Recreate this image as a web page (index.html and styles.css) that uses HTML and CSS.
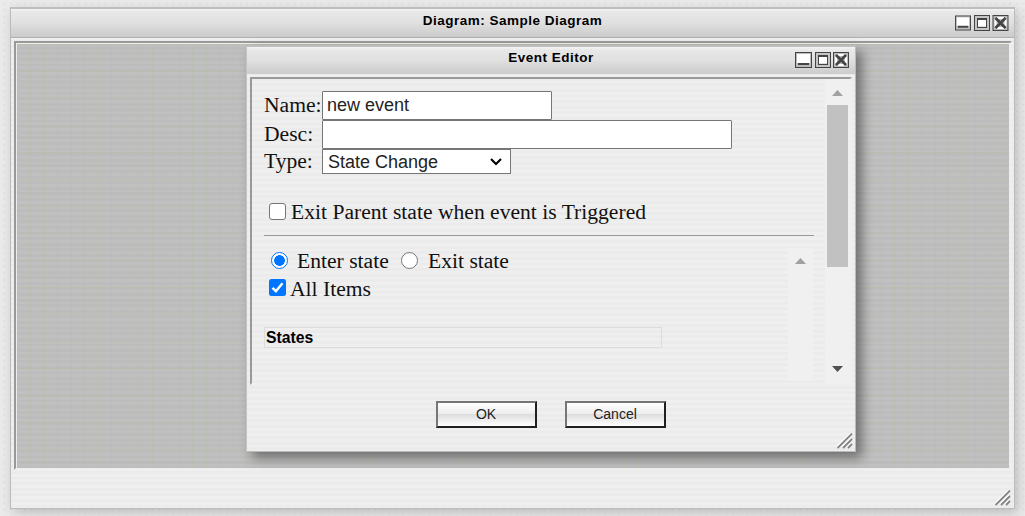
FILE: index.html
```html
<!DOCTYPE html>
<html lang="en">
<head>
<meta charset="utf-8">
<title>Diagram: Sample Diagram</title>
<link rel="stylesheet" href="styles.css">
</head>
<body>
<svg class="defs" width="0" height="0">
  <symbol id="min" viewBox="0 0 17 16"><path fill="#444" d="M0 0h17v16H0z"/><path fill="#bbb" d="M1 1h15v14H1z"/><path fill="#fff" d="M2 2h13v9H2z"/><path fill="#444" d="M3 11h11v2H3z"/></symbol>
  <symbol id="max" viewBox="0 0 16 16"><path fill="#444" d="M0 0h16v16H0z"/><path fill="#c4c4c4" d="M1 1h14v14H1z"/><path fill="#444" d="M3 3h10v10H3z"/><path fill="#ddd" d="M4 5h8v7H4z"/><path fill="#fff" d="M4 5h8v6H4z"/></symbol>
  <symbol id="close" viewBox="0 0 16 16"><path fill="#444" d="M0 0h16v16H0z"/><path fill="#bbb" d="M1 1h14v14H1z"/><path fill="#fff" d="M4 2h8v2H4zM4 12h8v2H4zM2 4h2v8H2zM12 4h2v8h-2z"/><path stroke="#444" stroke-width="2.800" d="M3 3l10 10M13 3L3 13"/></symbol>
  <symbol id="grip" viewBox="0 0 16 16"><path stroke="#fff" stroke-width="2" d="M0 14L14 0M5.500 14L14 5.500M10.500 14l3.500-3.500"/><path stroke="#858585" stroke-width="1.800" d="M.5 15L15 .5M6 15l9-9M11 15l4-4"/></symbol>
</svg>
<main class="window outer">
  <header class="titlebar"><h1 class="title">Diagram: Sample Diagram</h1>
    <div class="controls"><svg class="ctl"><use href="#min"/></svg><svg class="ctl"><use href="#max"/></svg><svg class="ctl wide"><use href="#close"/></svg></div>
  </header>
  <section class="inset board"><div class="canvas"></div></section>
  <footer class="foot"><svg class="grip"><use href="#grip"/></svg></footer>
</main>
<section class="window dialog">
  <header class="titlebar"><h2 class="title">Event Editor</h2>
    <div class="controls"><svg class="ctl wide"><use href="#min"/></svg><svg class="ctl"><use href="#max"/></svg><svg class="ctl"><use href="#close"/></svg></div>
  </header>
  <div class="inset editor">
    <div class="form">
      <div class="row"><label class="label" for="name">Name:</label><input class="field name" id="name" value="new event"></div>
      <div class="row"><label class="label" for="desc">Desc:</label><input class="field desc" id="desc"></div>
      <div class="row type"><label class="label">Type:</label><div class="select"><span>State Change</span><svg width="14" height="10"><path d="M2 2l5 5 5-5" fill="none" stroke="#000" stroke-width="2"/></svg></div></div>
      <div class="option parent"><span class="check"></span><span class="text">Exit Parent state when event is Triggered</span></div>
      <div class="rule"></div>
      <div class="sub">
        <div class="choices">
          <div class="option radios"><span class="radio on"></span><span class="text enter">Enter state</span><span class="radio second"></span><span class="text exit">Exit state</span></div>
          <div class="option all"><svg class="checked" width="17" height="17"><rect width="17" height="17" rx="2.500" fill="#0075ff"/><path d="M3.500 8.800l3.400 3.400 6.600-8" fill="none" stroke="#fff" stroke-width="2.500"/></svg><span class="text">All Items</span></div>
          <div class="states">States</div>
        </div>
        <div class="scroll inner"><i class="up"></i></div>
      </div>
    </div>
    <div class="scroll"><i class="up"></i><div class="thumb"></div><i class="down"></i></div>
  </div>
  <footer class="foot actions"><button class="btn">OK</button><button class="btn">Cancel</button><svg class="grip"><use href="#grip"/></svg></footer>
</section>
</body>
</html>
```
FILE: styles.css
```css
* { box-sizing: border-box; }
body {
  margin: 0; width: 1025px; height: 516px; overflow: hidden; position: relative;
  font-family: "Liberation Sans", Arial, sans-serif;
  background: radial-gradient(circle, #dcdcdc 0.6px, transparent 1.2px) 1px 0 / 6.750px 6.750px, #ebebeb;
}
.defs { position: absolute; }
.window {
  position: absolute; display: flex; flex-direction: column;
  border: 1px solid #bbb; border-top: 2px solid #bebebe;
  background: repeating-linear-gradient(#efefef 0 2.800px, #ebebeb 2.800px 5.600px);
}
.outer { left: 10px; top: 7px; width: 1005px; height: 502px; box-shadow: 3px 4px 12px rgba(0,0,0,.2); }
.dialog { left: 246px; top: 45px; width: 610px; height: 407px; border-left-color: #c4c4c4; box-shadow: 6px 6px 11px rgba(0,0,0,.42); }
.titlebar {
  position: relative; height: 29px; flex: none; display: flex; justify-content: center; padding-top: 4px;
  background: linear-gradient(#f4f4f4 0, #e8e8e8 3px, #e0e0e0 50%, #cbcbcb);
  border-bottom: 1px solid #b0b0b0;
}
.dialog .titlebar { height: 27px; border-bottom: 0; padding-top: 3px; }
.title { margin: 0; font-size: 13.500px; line-height: 16px; font-weight: bold; letter-spacing: .5px; }
.controls { position: absolute; right: 5px; top: 6px; display: flex; gap: 2.500px; }
.dialog .controls { top: 5px; right: 6px; gap: 2.500px; }
.ctl { width: 16px; height: 16px; }
.ctl.wide { width: 17px; }
.inset { border: 2px solid; border-color: #999 #efefef #efefef #999; margin: 3px 3px 0; flex: none; }
.board { height: 429px; padding: 1px; padding-right: 0; margin-right: 2px; }
.canvas {
  height: 424px; margin-right: 1px;
  background:
    linear-gradient(90deg, transparent 13px, rgba(180,190,168,.5) 13px 14px, transparent 14px) 0 0 / 27px 100%,
    linear-gradient(90deg, transparent 13px, rgba(180,190,168,.5) 13px 14px, transparent 14px) 14px 0 / 27px 100%,
    linear-gradient(transparent 26px, rgba(180,190,168,.65) 26px) 0 1px / 100% 27px,
    linear-gradient(transparent 26px, rgba(180,190,168,.3) 26px) 0 14px / 100% 27px,
    repeating-linear-gradient(#c0c0c0 0 2.800px, #bcbcbc 2.800px 5.600px);
}
.foot { flex: 1; display: flex; justify-content: flex-end; align-items: flex-end; padding: 0 3px 2px; }
.grip { width: 16px; height: 16px; }
.editor { height: 308px; display: flex; margin-right: 3px; }
.form { flex: 1; padding: 12px 11px 0 12px; font: 21.600px/28px "Liberation Serif", "Times New Roman", serif; color: #111; }
.row { display: flex; height: 29px; }
.row.type { height: 26px; }
.label { width: 58px; white-space: nowrap; }
.row.type .label { line-height: 24px; }
.field { height: 29px; border: 1px solid #767676; border-radius: 1px; padding: 0 5px 1px 4px; background: #fff; font: 18px "Liberation Sans", Arial, sans-serif; color: #222; outline: 0; }
.name { width: 230px; }
.desc { width: 410px; }
.select { width: 189px; height: 25px; border: 1px solid #767676; background: #fff; display: flex; align-items: center; justify-content: space-between; padding: 1px 7px 0 5px; font: 18px/23px "Liberation Sans", Arial, sans-serif; color: #222; }
.option { display: flex; align-items: center; height: 28px; padding-left: 5px; white-space: nowrap; }
.option .text { padding-top: 2px; }
.parent { margin-top: 22px; margin-bottom: 10px; }
.check { width: 17px; height: 17px; border: 1px solid #767676; border-radius: 3px; background: #fff; margin-right: 5px; }
.rule { height: 2px; border-top: 1px solid #999; border-bottom: 1px solid #eee; }
.sub { display: flex; height: 133px; margin-top: 11px; padding-right: 1px; }
.choices { flex: 1; }
.radio { width: 17px; height: 17px; border: 1px solid #767676; border-radius: 50%; background: #fff; }
.radio.on { border-color: #0075ff; background: radial-gradient(circle, #0075ff 5px, #fff 5.600px); }
.radios { height: 26px; padding-left: 7px; margin-top: -1px; }
.enter { margin-left: 9px; width: 104px; }
.exit { margin-left: 10px; }
.all { height: 28px; }
.all .text { padding-top: 4px; }
.checked { margin-right: 4px; }
.states { width: 398px; height: 21px; margin-top: 26px; border: 1px solid #dcdcdc; padding-left: 1px; font: bold 15.750px/19px "Liberation Sans", Arial, sans-serif; color: #000; }
.scroll { width: 25px; background: #f0f0f0; display: flex; flex-direction: column; align-items: center; padding-top: 11px; flex: none; }
.scroll.inner { margin: 0; padding-top: 10px; }
.up { width: 11px; height: 6px; background: #a0a0a0; clip-path: polygon(50% 0, 100% 100%, 0 100%); }
.down { width: 11px; height: 6px; background: #505050; clip-path: polygon(0 0, 100% 0, 50% 100%); margin-top: 99px; }
.thumb { width: 21px; height: 162px; background: #c1c1c1; margin-top: 9px; }
.actions { padding-left: 189px; padding-right: 2px; justify-content: flex-start; align-items: flex-start; padding-top: 16px; }
.btn { width: 101px; height: 27px; margin: 0 28px 0 0; padding: 0 1px 2px 0; border: 2px solid; border-color: #767676 #202020 #202020 #767676; background: linear-gradient(#fff, #ededed 48%, #dedede 50%, #fff); font: 14px "Liberation Sans", Arial, sans-serif; color: #222; }
.actions .grip { margin-left: auto; align-self: flex-end; }
```
